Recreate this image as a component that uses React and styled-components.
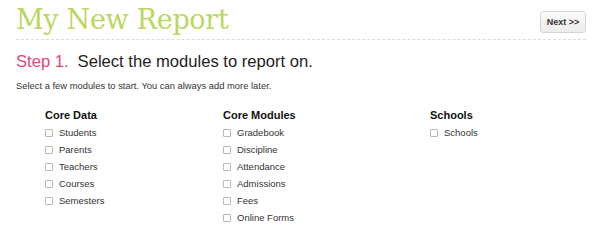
import React from 'react'
import styled, { createGlobalStyle } from 'styled-components'

const GlobalStyle = createGlobalStyle`
    body{
        margin:0;
        background:#fff;
        font-family:"Liberation Sans", Arial, sans-serif;
    }
`

const columns = [
    { title: 'Core Data', items: ['Students', 'Parents', 'Teachers', 'Courses', 'Semesters'] },
    { title: 'Core Modules', items: ['Gradebook', 'Discipline', 'Attendance', 'Admissions', 'Fees', 'Online Forms'] },
    { title: 'Schools', items: ['Schools'] },
]

function App() {
    return (
        <PageStyled>
            <GlobalStyle />
            <Header>
                <Title>My New Report</Title>
                <NextButton>Next &gt;&gt;</NextButton>
            </Header>
            <StepHeading>
                <span className="step">Step 1.</span>
                Select the modules to report on.
            </StepHeading>
            <Hint>Select a few modules to start. You can always add more later.</Hint>
            <ModuleGrid>
                {columns.map((col) => (
                    <Column key={col.title}>
                        <ColumnTitle>{col.title}</ColumnTitle>
                        {col.items.map((item) => (
                            <Option key={item}>
                                <Box />
                                {item}
                            </Option>
                        ))}
                    </Column>
                ))}
            </ModuleGrid>
        </PageStyled>
    )
}

const PageStyled = styled.div`
    width:570px;
    padding:0 14px 0 16px;
`

const Header = styled.div`
    display:flex;
    justify-content:space-between;
    align-items:flex-end;
    height:39px;
    border-bottom:1px dashed #dcdcdc;
`

const Title = styled.h1`
    margin:0 0 2px;
    font-family:"DejaVu Serif", "Liberation Serif", serif;
    font-weight:normal;
    font-size:27px;
    line-height:34px;
    color:#b9d762;
    letter-spacing:-0.3px;
`

const NextButton = styled.button`
    margin-bottom:6px;
    width:46px;
    height:22px;
    padding:0;
    border:1px solid #d4d4d4;
    border-radius:3px;
    background:linear-gradient(#fbfbfb, #ececec);
    font-family:"Liberation Sans", Arial, sans-serif;
    font-size:9px;
    font-weight:bold;
    color:#333;
`

const StepHeading = styled.h2`
    margin:10px 0 0;
    font-family:"Liberation Sans", Arial, sans-serif;
    font-weight:normal;
    font-size:16.6px;
    line-height:24px;
    color:#1e1e1e;
    .step{
        color:#e0467c;
        margin-right:9px;
    }
`

const Hint = styled.p`
    margin:6px 0 0;
    font-size:9.4px;
    line-height:12px;
    color:#333;
`

const ModuleGrid = styled.div`
    display:grid;
    grid-template-columns:178px 207px auto;
    margin:16px 0 0 29px;
`

const Column = styled.div`
    display:flex;
    flex-direction:column;
`

const ColumnTitle = styled.div`
    font-size:11px;
    font-weight:bold;
    line-height:15px;
    color:#111;
    margin-bottom:1px;
`

const Option = styled.label`
    display:flex;
    align-items:center;
    height:17px;
    font-size:9.5px;
    color:#333;
`

const Box = styled.span`
    width:6px;
    height:6px;
    border:1px solid #b8b8b8;
    border-radius:1px;
    margin-right:6px;
`

export default App
